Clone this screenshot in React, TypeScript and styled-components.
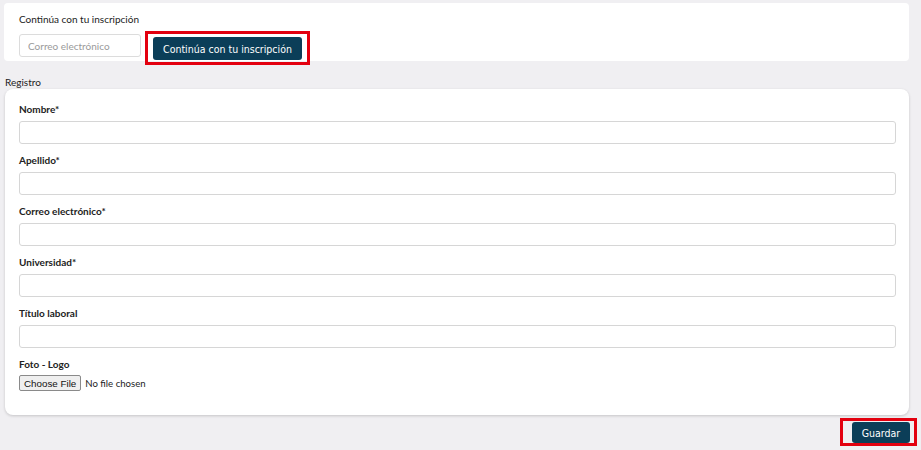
import React from "react";
import styled, { createGlobalStyle } from "styled-components";

const Global = createGlobalStyle`
  html, body { margin: 0; padding: 0; background: #f0eff2; }
  body { font-family: Lato, "Open Sans", sans-serif; color: #222; }
  * { box-sizing: border-box; }
`;

const Page = styled.div`
  width: 921px;
  height: 450px;
  padding: 3px 12px 0 4px;
  display: flex;
  flex-direction: column;
`;

const TopCard = styled.section`
  background: #fff;
  border-radius: 4px;
  height: 58px;
  padding: 9px 15px 0 15px;
  display: flex;
  flex-direction: column;
  gap: 5px;
`;

const SmallTitle = styled.div`
  font-size: 10px;
  line-height: 14px;
  color: #222;
`;

const InlineRow = styled.div`
  display: flex;
  align-items: flex-start;
`;

const EmailInput = styled.input`
  width: 122px;
  height: 23px;
  margin: 3px 4px 0 0;
  border: 1px solid #dcdcdc;
  border-radius: 3px;
  padding: 0 8px;
  font-family: Lato, sans-serif;
  font-size: 10px;
  color: #333;
  &::placeholder { color: #9a9a9a; }
`;

const Highlight = styled.div<{ $pad: string }>`
  border: 3px solid #e3000f;
  padding: ${(p) => p.$pad};
  display: inline-flex;
`;

const DarkButton = styled.button<{ $w: number; $h: number }>`
  width: ${(p) => p.$w}px;
  height: ${(p) => p.$h}px;
  background: #0b3e58;
  color: #fff;
  border: none;
  border-radius: 3px;
  font-family: "DejaVu Sans Condensed", "DejaVu Sans", Tahoma, sans-serif;
  font-size: 10.5px;
  padding: 0;
  cursor: pointer;
`;

const SectionLabel = styled.div`
  font-size: 10px;
  line-height: 14px;
  margin: 14px 0 0 1px;
  color: #222;
`;

const FormCard = styled.form`
  margin: 0 0 0 1px;
  background: #fff;
  border-radius: 8px;
  box-shadow: 0 1px 3px rgba(0, 0, 0, 0.18);
  height: 326px;
  padding: 13px 13px 0 14px;
  display: flex;
  flex-direction: column;
  gap: 9px;
`;

const Field = styled.div`
  display: flex;
  flex-direction: column;
  gap: 5px;
`;

const Label = styled.label`
  font-weight: 700;
  font-size: 10px;
  line-height: 14px;
  color: #222;
`;

const TextInput = styled.input`
  width: 100%;
  height: 23px;
  border: 1px solid #d6d6d6;
  border-radius: 3px;
  padding: 0 8px;
  font-family: Lato, sans-serif;
  font-size: 11px;
`;

const FileInput = styled.input`
  font-family: Lato, sans-serif;
  font-size: 9.6px;
  color: #222;
  height: 16px;
  margin: -1px 0 0 0;
  &::file-selector-button {
    font-family: "Liberation Sans", Arial, sans-serif;
    font-size: 9.8px;
    height: 16px;
    padding: 0 4px;
    margin-right: 4px;
    border: 1px solid #8a8a8a;
    border-radius: 2px;
    background: #efefef;
    color: #111;
  }
`;

const Footer = styled.div`
  display: flex;
  justify-content: flex-end;
  padding: 3px 0 0 0;
  margin-right: -8px;
`;

const fields = [
  "Nombre*",
  "Apellido*",
  "Correo electrónico*",
  "Universidad*",
  "Título laboral",
];

export default function App() {
  return (
    <>
      <Global />
      <Page>
        <TopCard>
          <SmallTitle>Continúa con tu inscripción</SmallTitle>
          <InlineRow>
            <EmailInput placeholder="Correo electrónico" />
            <Highlight $pad="3px 5px 2px 5px">
              <DarkButton $w={149} $h={23} type="button">
                Continúa con tu inscripción
              </DarkButton>
            </Highlight>
          </InlineRow>
        </TopCard>
        <SectionLabel>Registro</SectionLabel>
        <FormCard>
          {fields.map((f) => (
            <Field key={f}>
              <Label>{f}</Label>
              <TextInput />
            </Field>
          ))}
          <Field>
            <Label>Foto - Logo</Label>
            <FileInput type="file" />
          </Field>
        </FormCard>
        <Footer>
          <Highlight $pad="1px 4px 0 9px">
            <DarkButton $w={58} $h={21} type="button">
              Guardar
            </DarkButton>
          </Highlight>
        </Footer>
      </Page>
    </>
  );
}
